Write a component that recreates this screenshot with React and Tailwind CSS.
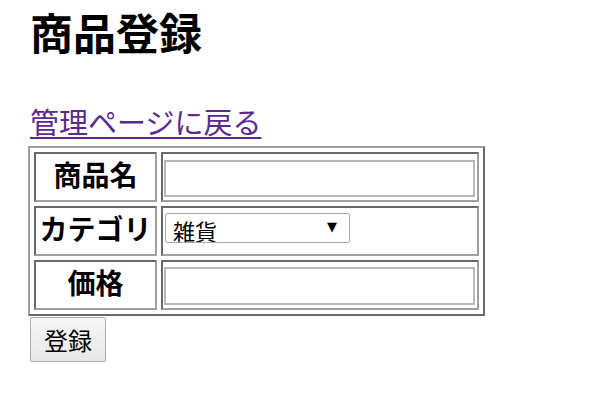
import React from "react";

export default function App() {
  return (
    <div className="min-h-[396px] bg-white pl-[28px] text-black font-['Noto_Sans_CJK_JP','Noto_Sans',sans-serif]">
      <h1 className="m-0 pl-[2px] text-[43px] font-bold leading-[62px]">商品登録</h1>
      <div className="mt-[42px] h-[34px] pl-[2px] text-[29px] leading-[34px]">
        <a href="#" className="text-[#5a2a8e] underline decoration-[1.5px] underline-offset-[3px]">
          管理ページに戻る
        </a>
      </div>
      <table className="mt-[8px] border-separate border-spacing-[4px] border-2 border-t-[#a0a0a0] border-l-[#a0a0a0] border-b-[#696969] border-r-[#696969]">
        <tbody>
          <tr>
            <th className="h-[50px] w-[123px] border-2 border-t-[#696969] border-l-[#696969] border-b-[#a0a0a0] border-r-[#a0a0a0] p-0 pb-[6px] text-center align-middle text-[28px] font-bold leading-[36px]">
              商品名
            </th>
            <td className="h-[50px] w-[318px] border-2 border-t-[#696969] border-l-[#696969] border-b-[#a0a0a0] border-r-[#a0a0a0] p-0 pl-[1px] pt-[6px] align-top">
              <input
                type="text"
                className="block h-[37px] w-[311px] border-2 border-[#b8b8b8] bg-white outline-none"
              />
            </td>
          </tr>
          <tr>
            <th className="h-[50px] w-[123px] border-2 border-t-[#696969] border-l-[#696969] border-b-[#a0a0a0] border-r-[#a0a0a0] p-0 pb-[6px] text-center align-middle text-[28px] font-bold leading-[36px]">
              カテゴリ
            </th>
            <td className="h-[50px] border-2 border-t-[#696969] border-l-[#696969] border-b-[#a0a0a0] border-r-[#a0a0a0] p-0 pl-[2px] pt-[5px] align-top">
              <div className="relative h-[30px] w-[185px]">
                <select className="block h-[30px] w-[185px] appearance-none rounded-[2px] border border-[#a9a9a9] bg-white pl-[7px] pt-[3px] text-[22px] leading-[26px] text-black outline-none font-['Noto_Sans_CJK_JP',sans-serif]">
                  <option>雑貨</option>
                  <option>食品</option>
                  <option>衣類</option>
                </select>
                <span className="pointer-events-none absolute left-[162px] top-[6px] text-[13px] leading-[16px] text-black font-['DejaVu_Sans',sans-serif]">
                  ▼
                </span>
              </div>
            </td>
          </tr>
          <tr>
            <th className="h-[50px] w-[123px] border-2 border-t-[#696969] border-l-[#696969] border-b-[#a0a0a0] border-r-[#a0a0a0] p-0 pb-[6px] text-center align-middle text-[28px] font-bold leading-[36px]">
              価格
            </th>
            <td className="h-[50px] border-2 border-t-[#696969] border-l-[#696969] border-b-[#a0a0a0] border-r-[#a0a0a0] p-0 pl-[1px] pt-[5px] align-top">
              <input
                type="text"
                className="block h-[38px] w-[311px] border-2 border-[#b8b8b8] bg-white outline-none"
              />
            </td>
          </tr>
        </tbody>
      </table>
      <button
        type="button"
        className="ml-[2px] mt-[1px] block h-[45px] w-[76px] rounded-[2px] border border-[#adadad] bg-gradient-to-b from-[#f6f6f6] to-[#e8e8e8] text-[24px] leading-[30px] text-black"
      >
        登録
      </button>
    </div>
  );
}
